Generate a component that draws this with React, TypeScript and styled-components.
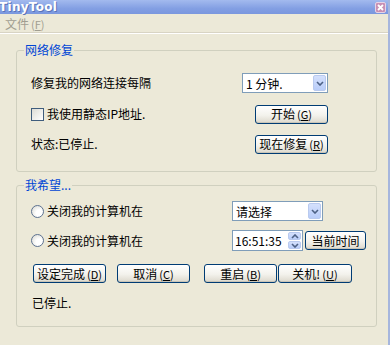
import styled, { createGlobalStyle } from 'styled-components'

const GlobalStyle = createGlobalStyle`
    html, body {
        margin: 0;
        padding: 0;
        background: #ece9d8;
    }
    body {
        font-family: "Noto Sans CJK SC", "DejaVu Sans", sans-serif;
        font-size: 12px;
        color: #000;
    }
`;

function Chevron({ up = false }: { up?: boolean }) {
    return (
        <svg width="8" height="5" viewBox="0 0 8 5">
            <path
                d={up ? "M1 4 L4 1 L7 4" : "M1 1 L4 4 L7 1"}
                fill="none"
                stroke="#4d6185"
                strokeWidth="1.6"
            />
        </svg>
    );
}

function CloseGlyph() {
    return (
        <svg width="7" height="7" viewBox="0 0 7 7">
            <path d="M1 1 L6 6 M6 1 L1 6" stroke="#fff" strokeWidth="1.8" />
        </svg>
    );
}

function Key({ k }: { k: string }) {
    return <Shortcut>(<u>{k}</u>)</Shortcut>;
}

export default function App() {
    return (
        <Window>
            <GlobalStyle />
            <TitleBar>
                <Title>TinyTool</Title>
                <CloseBox>
                    <CloseGlyph />
                </CloseBox>
            </TitleBar>
            <MenuBar>
                <MenuItem>
                    文件<Key k="F" />
                </MenuItem>
            </MenuBar>

            <Body>
                <Group $padBottom={18}>
                    <Legend>网络修复</Legend>
                    <RepairGrid>
                        <Label>修复我的网络连接每隔</Label>
                        <Select $width={86}>
                            <SelectText>1 分钟.</SelectText>
                            <DropButton>
                                <Chevron />
                            </DropButton>
                        </Select>

                        <CheckRow>
                            <CheckBox />
                            <Label>我使用静态IP地址.</Label>
                        </CheckRow>
                        <XpButton $width={73}>
                            开始<Key k="G" />
                        </XpButton>

                        <Label>状态:已停止.</Label>
                        <XpButton $width={73}>
                            现在修复<Key k="R" />
                        </XpButton>
                    </RepairGrid>
                </Group>

                <Group $padBottom={16} $top={6}>
                    <Legend>我希望...</Legend>
                    <PlanGrid>
                        <CheckRow>
                            <Radio />
                            <Label>关闭我的计算机在</Label>
                        </CheckRow>
                        <Select $width={91}>
                            <SelectText>请选择</SelectText>
                            <DropButton>
                                <Chevron />
                            </DropButton>
                        </Select>

                        <CheckRow>
                            <Radio />
                            <Label>关闭我的计算机在</Label>
                        </CheckRow>
                        <TimeRow>
                            <TimeField>
                                <SelectText>16:51:35</SelectText>
                                <Spinner>
                                    <SpinHalf>
                                        <Chevron up />
                                    </SpinHalf>
                                    <SpinHalf>
                                        <Chevron />
                                    </SpinHalf>
                                </Spinner>
                            </TimeField>
                            <XpButton $width={61}>当前时间</XpButton>
                        </TimeRow>
                    </PlanGrid>

                    <ButtonRow>
                        <XpButton $width={73} $ml={2}>
                            设定完成<Key k="D" />
                        </XpButton>
                        <XpButton $width={73} $ml={11}>
                            取消<Key k="C" />
                        </XpButton>
                        <XpButton $width={73} $ml={14}>
                            重启<Key k="B" />
                        </XpButton>
                        <XpButton $width={74} $ml={1}>
                            关机!<Key k="U" />
                        </XpButton>
                    </ButtonRow>

                    <StatusText>已停止.</StatusText>
                </Group>
            </Body>
        </Window>
    );
}

const Window = styled.div`
    width: 390px;
    height: 345px;
    box-sizing: border-box;
    border-right: 2px solid #a6b6dd;
    background: #ece9d8;
    display: flex;
    flex-direction: column;
    overflow: hidden;
`;

const TitleBar = styled.div`
    height: 14px;
    display: flex;
    align-items: center;
    justify-content: space-between;
    padding-right: 2px;
    background: linear-gradient(#a3baee, #839fe3 60%, #7a97de);
`;

const Title = styled.span`
    font-family: "DejaVu Sans", sans-serif;
    font-weight: bold;
    font-size: 12px;
    color: #fff;
    letter-spacing: 0.3px;
    margin-left: -1px;
    text-shadow: 1px 1px 0 #5a74b8;
`;

const CloseBox = styled.div`
    width: 11px;
    height: 11px;
    margin-top: 1px;
    box-sizing: border-box;
    border: 1px solid #e6d4e6;
    border-radius: 2px;
    background: #c890b4;
    display: flex;
    align-items: center;
    justify-content: center;
`;

const MenuBar = styled.div`
    height: 19px;
    display: flex;
    align-items: center;
    padding-left: 5px;
    border-bottom: 1px solid #fff;
    box-shadow: inset 0 -1px 0 #d8d4c4;
`;

const MenuItem = styled.span`
    color: #a19e91;
`;

const Shortcut = styled.span`
    margin-left: 2px;
    font-size: 11px;
`;

const Body = styled.div`
    padding: 9px 11px 0 16px;
    display: flex;
    flex-direction: column;
`;

const Group = styled.fieldset<{ $padBottom: number; $top?: number }>`
    margin: ${({ $top }) => $top ?? 0}px 0 0 0;
    padding: 9px 0 ${({ $padBottom }) => $padBottom}px 14px;
    border: 1px solid #d0d0bf;
    border-radius: 3px;
    min-width: 0;
`;

const Legend = styled.legend`
    color: #0046d5;
    padding: 0 1px;
    margin-left: -7px;
    line-height: 14px;
`;

const RepairGrid = styled.div`
    display: grid;
    grid-template-columns: 1fr auto;
    grid-template-rows: 20px 18px 18px;
    row-gap: 12px;
    align-items: center;
    padding-right: 48px;
    margin-top: 7px;

    & > *:nth-child(even) {
        justify-self: end;
    }
`;

const PlanGrid = styled.div`
    display: grid;
    grid-template-columns: 201px auto;
    grid-template-rows: 20px 21px;
    row-gap: 9px;
    align-items: center;
`;

const Label = styled.span`
    white-space: nowrap;
    line-height: 14px;
`;

const CheckRow = styled.div`
    display: flex;
    align-items: center;
    gap: 3px;
`;

const CheckBox = styled.span`
    width: 13px;
    height: 13px;
    box-sizing: border-box;
    border: 1px solid #3f5d7d;
    background: linear-gradient(135deg, #dcdcd5, #fff);
`;

const Radio = styled.span`
    width: 13px;
    height: 13px;
    box-sizing: border-box;
    border: 1px solid #5d7291;
    border-radius: 50%;
    background: radial-gradient(circle at 65% 65%, #fff 30%, #d6d6ce);
`;

const Select = styled.div<{ $width: number }>`
    width: ${({ $width }) => $width}px;
    height: 20px;
    box-sizing: border-box;
    border: 1px solid #7f9db9;
    background: #fff;
    display: flex;
    align-items: center;
    justify-content: space-between;
    padding: 0 1px 0 3px;
`;

const SelectText = styled.span`
    white-space: nowrap;
`;

const DropButton = styled.span`
    width: 13px;
    height: 16px;
    box-sizing: border-box;
    border: 1px solid #b9caef;
    border-radius: 2px;
    background: linear-gradient(#d4e0fc, #b9cdf9);
    display: flex;
    align-items: center;
    justify-content: center;
`;

const TimeRow = styled.div`
    display: flex;
    align-items: center;
    gap: 2px;
`;

const TimeField = styled(Select)`
    width: 71px;
    height: 21px;
    padding: 0 1px 0 2px;
`;

const Spinner = styled.span`
    display: flex;
    flex-direction: column;
    gap: 1px;
`;

const SpinHalf = styled(DropButton)`
    height: 8px;
`;

const XpButton = styled.button<{ $width: number; $ml?: number }>`
    width: ${({ $width }) => $width}px;
    height: 19px;
    margin-left: ${({ $ml }) => $ml ?? 0}px;
    padding: 0;
    box-sizing: border-box;
    border: 1px solid #003c74;
    border-radius: 3px;
    background: linear-gradient(#ffffff, #f3f2ec 55%, #dcd8cc);
    box-shadow: inset 0 -1px 0 #c9c5b8;
    font-family: "Noto Sans CJK SC", "DejaVu Sans", sans-serif;
    font-size: 12px;
    line-height: 14px;
    color: #000;
    white-space: nowrap;
    display: flex;
    align-items: center;
    justify-content: center;
`;

const ButtonRow = styled.div`
    display: flex;
    align-items: center;
    margin-top: 13px;
`;

const StatusText = styled.div`
    margin-top: 13px;
    margin-left: 1px;
    line-height: 14px;
`;
